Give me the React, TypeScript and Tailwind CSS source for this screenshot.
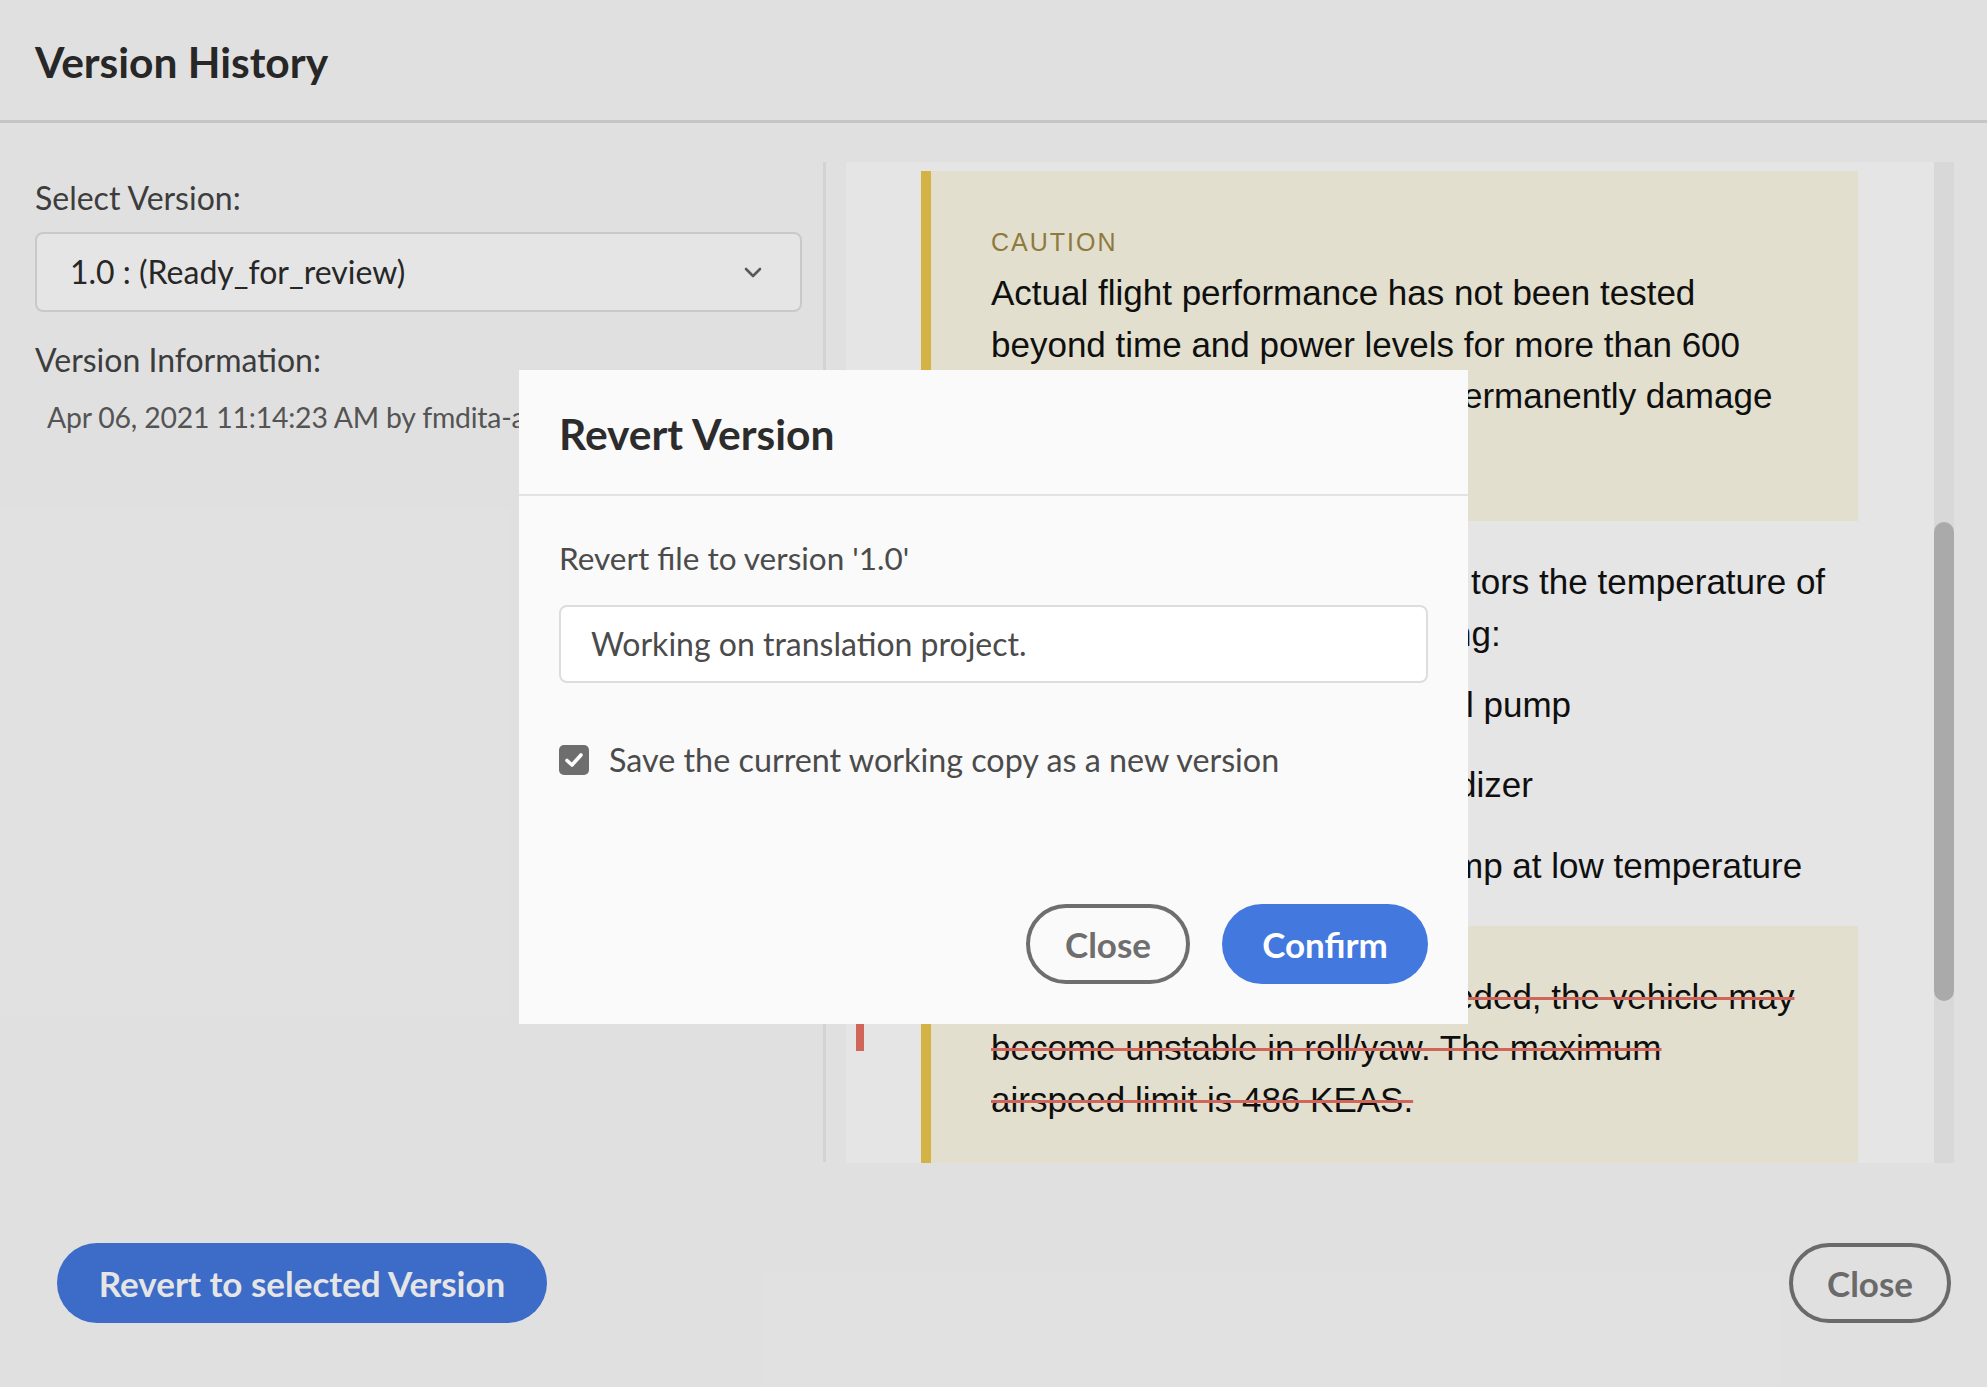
import React from "react";

const ui = "font-['Lato',sans-serif]";
const doc = "font-['Liberation_Sans',Arial,sans-serif]";

function Chevron() {
  return (
    <svg width="18" height="11" viewBox="0 0 18 11" fill="none">
      <path d="M2 2 L9 9 L16 2" stroke="#646464" strokeWidth="2.6" strokeLinecap="round" strokeLinejoin="round" />
    </svg>
  );
}

function CheckMark() {
  return (
    <svg width="20" height="16" viewBox="0 0 20 16" fill="none">
      <path d="M3 8.5 L8 13 L17 3" stroke="#ffffff" strokeWidth="3.6" strokeLinecap="round" strokeLinejoin="round" />
    </svg>
  );
}

// a line of text whose start lies under the dialog; the prefix keeps the visible part in place
function CutLine({ prefix, width, text, strike }: { prefix: string; width: string; text: string; strike?: boolean }) {
  const deco = strike ? "line-through decoration-[#e77264] decoration-[3px]" : "";
  return (
    <div className="flex whitespace-nowrap">
      <span className={`shrink-0 overflow-hidden ${width} ${deco}`}>{prefix}</span>
      <span className={deco}>{text}</span>
    </div>
  );
}

function LeftColumn() {
  return (
    <div className="w-[802px] shrink-0 pl-[35px] pt-[56px] text-[32px] leading-[38px]">
      <div className="text-[#444444]">Select Version:</div>
      <div className="mt-[15px] flex h-[80px] items-center justify-between rounded-[8px] border-2 border-[#e0e0e0] bg-white pl-[33px] pr-[38px]">
        <span className="text-[#2c2c2c]">1.0 : (Ready_for_review)</span>
        <Chevron />
      </div>
      <div className="mt-[29px] text-[#444444]">Version Information:</div>
      <div className="mt-[20px] whitespace-nowrap pl-[12px] text-[28.4px] leading-[36px] tracking-[-0.2px] text-[#5e5e5e]">
        Apr 06, 2021 11:14:23 AM by fmdita-author@adobe.com
      </div>
    </div>
  );
}

function Preview() {
  return (
    <div className="ml-[20px] mt-[39px] flex h-[1001px] w-[1108px] shrink-0 bg-white">
      <div className={`relative flex-1 overflow-hidden pl-[75px] pt-[9px] text-[35px] leading-[51.5px] text-[#111111] ${doc}`}>
        <div className="w-[937px] border-l-[10px] border-[#ebc84d] bg-[#fcf9e6] pb-[48px] pl-[60px] pt-[56px]">
          <div className="text-[25px] leading-[30px] tracking-[2px] text-[#9f8845]">CAUTION</div>
          <div className="mt-[10px]">
            <div className="whitespace-nowrap">Actual flight performance has not been tested</div>
            <div className="whitespace-nowrap">beyond time and power levels for more than 600</div>
            <CutLine prefix="seconds. Doing so may p" width="w-[472px]" text="ermanently damage" />
            <div className="whitespace-nowrap">the engine.</div>
          </div>
        </div>

        <div className="mt-[35px]">
          <CutLine prefix="The engine control unit moni" width="w-[550px]" text="tors the temperature of" />
          <CutLine prefix="the followi" width="w-[531px]" text="ng:" />
        </div>
        <div className="mt-[20px]">
          <CutLine prefix="Fue" width="w-[545px]" text="l pump" />
        </div>
        <div className="mt-[28px]">
          <CutLine prefix="Oxi" width="w-[536px]" text="dizer" />
        </div>
        <div className="mt-[30px]">
          <CutLine prefix="Fuel pu" width="w-[533px]" text="mp at low temperature" />
        </div>

        <div className="mt-[34px] w-[937px] border-l-[10px] border-[#ebc84d] bg-[#fcf9e6] pb-[60px] pl-[60px] pt-[45px]">
          <CutLine prefix="If these limits are exc" width="w-[463px]" text="eded, the vehicle may" strike />
          <div className="whitespace-nowrap">
            <span className="line-through decoration-[#e77264] decoration-[3px]">become unstable in roll/yaw. The maximum</span>
          </div>
          <div className="whitespace-nowrap">
            <span className="line-through decoration-[#e77264] decoration-[3px]">airspeed limit is 486 KEAS.</span>
          </div>
        </div>

        <div className="absolute left-[10px] top-[813px] h-[76px] w-[8px] bg-[#e77264]" />
      </div>
      <div className="relative w-[20px] shrink-0 bg-[#f1f1f1]">
        <div className="absolute left-0 top-[360px] h-[479px] w-[20px] rounded-full bg-[#bebebe]" />
      </div>
    </div>
  );
}

function RevertDialog() {
  return (
    <div className={`absolute left-[519px] top-[370px] flex h-[654px] w-[949px] flex-col bg-[#fafafa] ${ui}`}>
      <div className="h-[126px] border-b-2 border-[#e3e3e3] pl-[40px] pt-[39px]">
        <h2 className="text-[42.5px] font-bold leading-[50px] text-[#2c2c2c]">Revert Version</h2>
      </div>
      <div className="flex flex-1 flex-col px-[40px] pb-[40px] pt-[43px] text-[32px] leading-[38px] text-[#4b4b4b]">
        <div className="text-[31.5px]">Revert file to version '1.0'</div>
        <div className="mt-[28px] flex h-[78px] items-center rounded-[8px] border-2 border-[#dddddd] bg-white pl-[30px]">
          Working on translation project.
        </div>
        <label className="mt-[58px] flex items-center gap-[20px]">
          <span className="flex h-[30px] w-[30px] items-center justify-center rounded-[5px] bg-[#6e6e6e]">
            <CheckMark />
          </span>
          <span className="text-[32.3px]">Save the current working copy as a new version</span>
        </label>
        <div className="mt-auto flex justify-end gap-[32px]">
          <button className="h-[80px] w-[164px] rounded-full border-4 border-[#6e6e6e] text-[35px] font-bold text-[#6e6e6e]">
            Close
          </button>
          <button className="h-[80px] w-[206px] rounded-full bg-[#4378df] text-[35px] font-bold text-white">
            Confirm
          </button>
        </div>
      </div>
    </div>
  );
}

export default function App() {
  return (
    <div className={`relative h-[1387px] w-[1987px] overflow-hidden bg-[#fafafa] ${ui}`}>
      <header className="h-[123px] border-b-[3px] border-[#dcdcdc] pl-[35px] pt-[37px]">
        <h1 className="text-[42.5px] font-bold leading-[50px] text-[#2c2c2c]">Version History</h1>
      </header>

      <div className="flex h-[1040px]">
        <LeftColumn />
        <div className="ml-[21px] mt-[39px] h-[1000px] w-[3px] shrink-0 bg-[#ebebeb]" />
        <Preview />
      </div>

      <footer className="flex items-start justify-between pl-[57px] pr-[36px] pt-[80px]">
        <button className="h-[80px] w-[490px] rounded-full bg-[#4378df] text-[35px] font-bold text-white">
          Revert to selected Version
        </button>
        <button className="h-[80px] w-[162px] rounded-full border-4 border-[#777777] text-[35px] font-bold text-[#777777]">
          Close
        </button>
      </footer>

      <div className="absolute inset-0 bg-black/10" />
      <RevertDialog />
    </div>
  );
}
